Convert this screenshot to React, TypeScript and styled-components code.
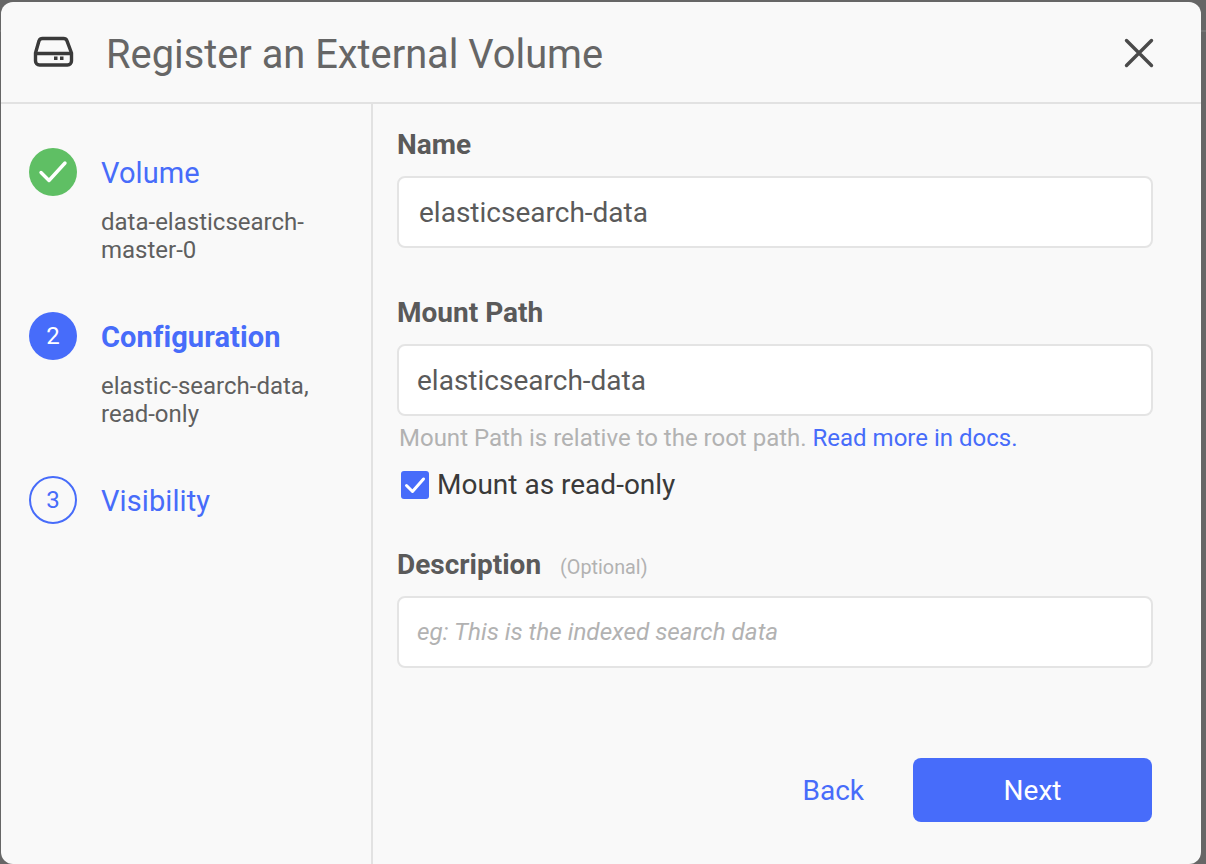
import styled, { createGlobalStyle } from 'styled-components';

const GlobalStyle = createGlobalStyle`
  html, body {
    margin: 0;
    padding: 0;
    height: 100%;
    background: #666;
    overflow: hidden;
  }
  * {
    box-sizing: border-box;
  }
`;

const Page = styled.div`
  width: 1206px;
  height: 864px;
  padding: 2px 5px 0 1px;
  font-family: Roboto, "Liberation Sans", sans-serif;
  background: linear-gradient(#666 30px, #747474 30px, #747474 32px, #666 32px);
`;

const Dialog = styled.div`
  height: 862px;
  background: #f9f9f9;
  border-radius: 12px;
  display: flex;
  flex-direction: column;
  overflow: hidden;
`;

const Header = styled.header`
  height: 102px;
  flex: none;
  border-bottom: 2px solid #e2e2e2;
  display: flex;
  align-items: center;
  padding: 0 47px 0 32px;
`;

const Title = styled.h1`
  margin: 4px 0 0 32px;
  flex: 1;
  font-size: 39.8px;
  font-weight: 400;
  color: #666;
`;

const CloseButton = styled.button`
  border: 0;
  padding: 0;
  margin-top: 2px;
  background: none;
  display: flex;
`;

const Body = styled.div`
  flex: 1;
  display: flex;
  min-height: 0;
`;

const Sidebar = styled.nav`
  width: 372px;
  flex: none;
  border-right: 2px solid #e2e2e2;
  padding: 44px 28px 0 28px;
`;

const Step = styled.div`
  display: grid;
  grid-template-columns: 48px 1fr;
  column-gap: 24px;
  margin-bottom: 48px;
`;

const StepBadge = styled.div<{ $variant: 'done' | 'active' | 'todo' }>`
  width: 48px;
  height: 48px;
  border-radius: 50%;
  display: flex;
  align-items: center;
  justify-content: center;
  font-size: 24px;
  color: ${(p) => (p.$variant === 'todo' ? '#476cfa' : '#fff')};
  background: ${(p) =>
    p.$variant === 'done' ? '#5fbf64' : p.$variant === 'active' ? '#476cfa' : 'transparent'};
  border: ${(p) => (p.$variant === 'todo' ? '2px solid #476cfa' : 'none')};
`;

const StepTitle = styled.div<{ $bold?: boolean }>`
  height: 48px;
  line-height: 50px;
  font-size: 29px;
  letter-spacing: 0.1px;
  font-weight: ${(p) => (p.$bold ? 700 : 400)};
  color: #476cfa;
`;

const StepDetail = styled.div`
  grid-column: 2;
  font-size: 24px;
  line-height: 28px;
  color: #5f5f5f;
  margin-top: 12px;
`;

const Main = styled.main`
  flex: 1;
  padding: 20px 48px 0 24px;
  display: flex;
  flex-direction: column;
`;

const Field = styled.div<{ $gap: number }>`
  margin-bottom: ${(p) => p.$gap}px;
`;

const Label = styled.label`
  display: block;
  height: 40px;
  line-height: 42px;
  font-size: 28px;
  font-weight: 700;
  color: #5a5a5a;
  margin-bottom: 12px;
`;

const Optional = styled.span`
  font-size: 19.8px;
  font-weight: 400;
  color: #b2b2b2;
  margin-left: 19px;
`;

const Input = styled.div<{ $inset?: number; $placeholder?: boolean }>`
  height: 72px;
  border: 2px solid #e4e4e4;
  border-radius: 8px;
  background: #fff;
  display: flex;
  align-items: center;
  padding-left: ${(p) => p.$inset ?? 18}px;
  font-size: ${(p) => (p.$placeholder ? 24.25 : 28)}px;
  font-style: ${(p) => (p.$placeholder ? 'italic' : 'normal')};
  color: ${(p) => (p.$placeholder ? '#b2b2b2' : '#5a5a5a')};
`;

const Hint = styled.p`
  margin: 7px 0 0 2px;
  font-size: 24px;
  line-height: 30px;
  color: #b2b2b2;
`;

const DocsLink = styled.a`
  color: #476cfa;
`;

const CheckRow = styled.div`
  display: flex;
  align-items: center;
  margin: 13px 0 0 4px;
  font-size: 28px;
  line-height: 38px;
  color: #3a3a3a;
`;

const CheckBox = styled.span`
  width: 28px;
  height: 28px;
  border-radius: 3px;
  background: #476cfa;
  display: flex;
  align-items: center;
  justify-content: center;
  margin-right: 8px;
`;

const Footer = styled.footer`
  display: flex;
  justify-content: flex-end;
  align-items: center;
  margin-top: 26px;
`;

const BackButton = styled.button`
  border: 0;
  background: none;
  padding: 0;
  font: inherit;
  font-size: 28px;
  color: #476cfa;
  margin-right: 49px;
`;

const NextButton = styled.button`
  width: 239px;
  height: 64px;
  margin-right: 1px;
  border: 0;
  border-radius: 8px;
  background: #476cfa;
  color: #fff;
  font: inherit;
  font-size: 28px;
`;

const DriveIcon = () => (
  <svg width="41" height="32" viewBox="0 0 41 32" fill="none" stroke="#3a3a3a" strokeWidth="3.4">
    <path d="M9.5 2.500h21c1.600 0 2.900.9 3.500 2.300L38.500 17v8c0 2.300-1.700 4-4 4h-28c-2.300 0-4-1.700-4-4v-8L6 4.800c.6-1.400 1.900-2.300 3.500-2.300z" strokeLinejoin="round" />
    <path d="M2 17.500h36" />
    <rect x="21" y="20.500" width="3.500" height="3.500" fill="#3a3a3a" stroke="none" />
    <rect x="27" y="20.500" width="3.500" height="3.500" fill="#3a3a3a" stroke="none" />
  </svg>
);

const CloseIcon = () => (
  <svg width="30" height="30" viewBox="0 0 30 30" stroke="#4a4a4a" strokeWidth="3.400" strokeLinecap="round">
    <path d="M2.500 2.500l25 25M27.500 2.500l-25 25" />
  </svg>
);

const CheckIcon = () => (
  <svg width="30" height="24" viewBox="0 0 30 24" fill="none" stroke="#fff" strokeWidth="3.400" strokeLinecap="round" strokeLinejoin="round">
    <path d="M3 12.500l8 8L27 3" />
  </svg>
);

const SmallCheckIcon = () => (
  <svg width="22" height="18" viewBox="0 0 22 18" fill="none" stroke="#fff" strokeWidth="3" strokeLinecap="round" strokeLinejoin="round">
    <path d="M2.500 9.500l6 6L19.500 3" />
  </svg>
);

const App = () => {
  return (
    <Page>
      <GlobalStyle />
      <Dialog>
        <Header>
          <DriveIcon />
          <Title>Register an External Volume</Title>
          <CloseButton>
            <CloseIcon />
          </CloseButton>
        </Header>
        <Body>
          <Sidebar>
            <Step>
              <StepBadge $variant="done">
                <CheckIcon />
              </StepBadge>
              <StepTitle>Volume</StepTitle>
              <StepDetail>data-elasticsearch-master-0</StepDetail>
            </Step>
            <Step>
              <StepBadge $variant="active">2</StepBadge>
              <StepTitle $bold>Configuration</StepTitle>
              <StepDetail>elastic-search-data, read-only</StepDetail>
            </Step>
            <Step>
              <StepBadge $variant="todo">3</StepBadge>
              <StepTitle>Visibility</StepTitle>
            </Step>
          </Sidebar>
          <Main>
            <Field $gap={44}>
              <Label>Name</Label>
              <Input $inset={20}>elasticsearch-data</Input>
            </Field>
            <Field $gap={40}>
              <Label>Mount Path</Label>
              <Input>elasticsearch-data</Input>
              <Hint>
                Mount Path is relative to the root path. <DocsLink>Read more in docs.</DocsLink>
              </Hint>
              <CheckRow>
                <CheckBox>
                  <SmallCheckIcon />
                </CheckBox>
                Mount as read-only
              </CheckRow>
            </Field>
            <Field $gap={64}>
              <Label>
                Description<Optional>(Optional)</Optional>
              </Label>
              <Input $placeholder>eg: This is the indexed search data</Input>
            </Field>
            <Footer>
              <BackButton>Back</BackButton>
              <NextButton>Next</NextButton>
            </Footer>
          </Main>
        </Body>
      </Dialog>
    </Page>
  );
};

export default App;
